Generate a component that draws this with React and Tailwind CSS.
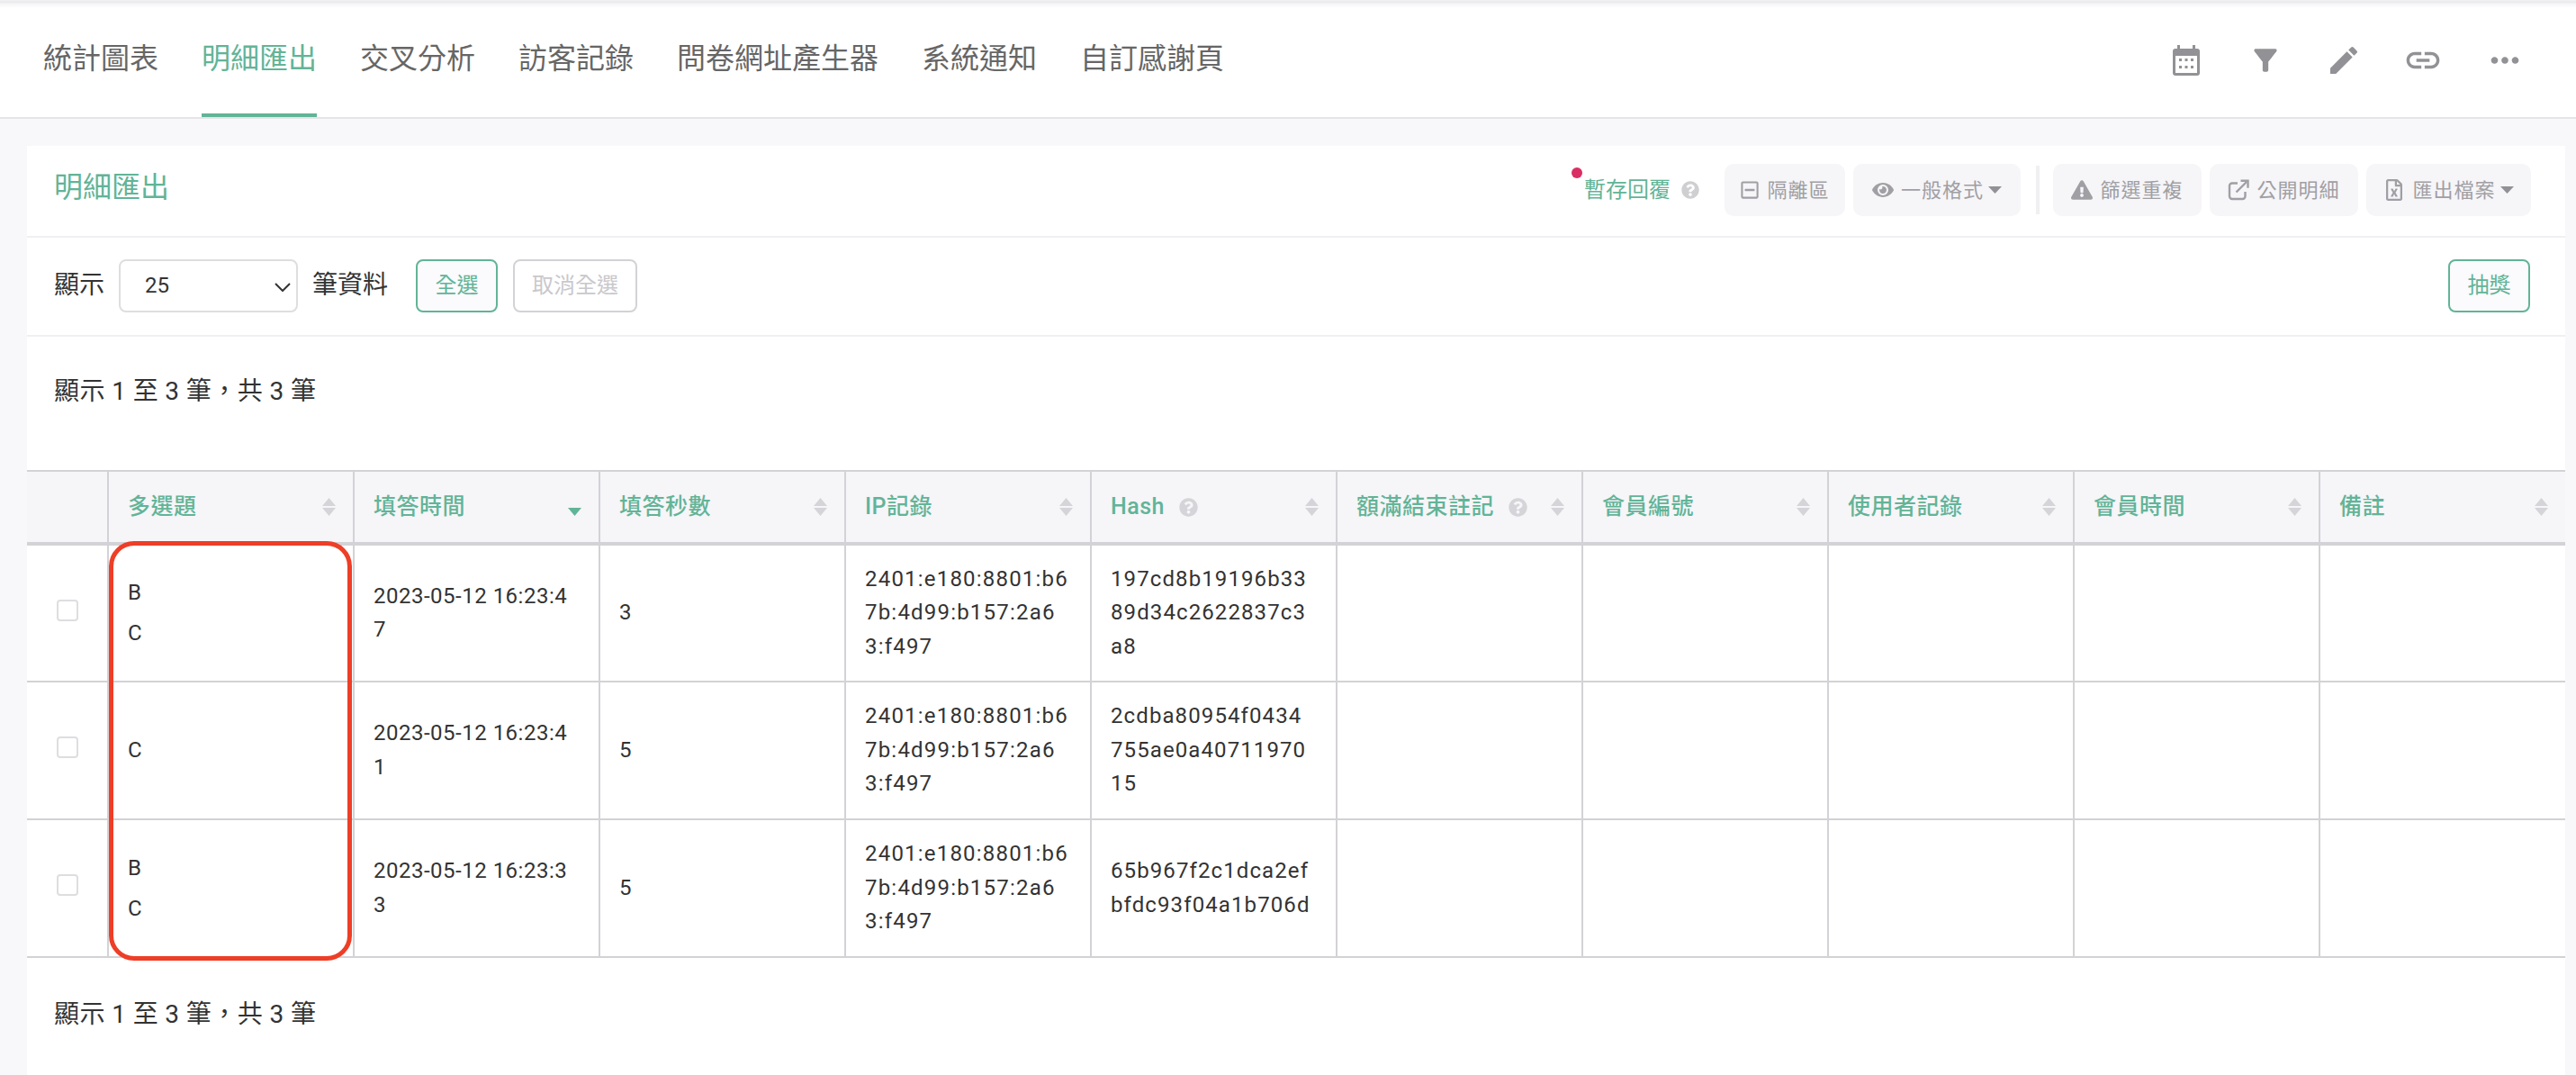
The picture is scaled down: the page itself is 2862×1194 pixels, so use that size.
import { FaExclamationTriangle, FaEye, FaQuestionCircle, FaRegFileExcel, FaRegMinusSquare } from 'react-icons/fa'
import { MdEdit, MdFilterAlt, MdLink, MdMoreHoriz } from 'react-icons/md'

const tabs = ['統計圖表', '明細匯出', '交叉分析', '訪客記錄', '問卷網址產生器', '系統通知', '自訂感謝頁']

const columns = [
  { label: '多選題' },
  { label: '填答時間', sorted: true },
  { label: '填答秒數' },
  { label: 'IP記錄' },
  { label: 'Hash', help: true },
  { label: '額滿結束註記', help: true },
  { label: '會員編號' },
  { label: '使用者記錄' },
  { label: '會員時間' },
  { label: '備註' },
]

const ipLines = ['2401:e180:8801:b6', '7b:4d99:b157:2a6', '3:f497']

const rows = [
  { choices: ['B', 'C'], time: '2023-05-12 16:23:47', secs: '3', hash: ['197cd8b19196b33', '89d34c2622837c3', 'a8'] },
  { choices: ['C'], time: '2023-05-12 16:23:41', secs: '5', hash: ['2cdba80954f0434', '755ae0a40711970', '15'] },
  { choices: ['B', 'C'], time: '2023-05-12 16:23:33', secs: '5', hash: ['65b967f2c1dca2ef', 'bfdc93f04a1b706d'] },
]

const pageInfo = '顯示 1 至 3 筆\uFF0C共 3 筆'

function CalendarIcon() {
  return (
    <svg width="30" height="34" viewBox="0 0 30 34" className="fill-[#929195]">
      <rect x="0" y="4" width="30" height="30" rx="3" />
      <rect x="5" y="0" width="3" height="6" />
      <rect x="22" y="0" width="3" height="6" />
      <rect x="3" y="12" width="24" height="19" fill="#fff" />
      <path d="M7 15h3v3H7zM13.5 15h3v3h-3zM20 15h3v3h-3zM7 23h3v3H7zM13.5 23h3v3h-3zM20 23h3v3h-3z" />
    </svg>
  )
}

function ShareIcon() {
  return (
    <svg width="24" height="24" viewBox="0 0 24 24" fill="none" stroke="#a09fa4" strokeWidth="2.4">
      <path d="M11 4.5H5a3 3 0 0 0-3 3V19a3 3 0 0 0 3 3h11.5a3 3 0 0 0 3-3v-5" />
      <path d="M9.500 14.500 21 3" />
      <path d="M14.500 1.800h8v8" />
    </svg>
  )
}

function Caret() {
  return (
    <svg width="15" height="8" viewBox="0 0 15 8" className="-ml-[3px] fill-[#929195]">
      <path d="M0 0h15L7.500 8z" />
    </svg>
  )
}

function SortIcon({ sorted }) {
  if (sorted) {
    return (
      <svg width="15" height="20" viewBox="0 0 15 20" className="fill-[#62b497]">
        <path d="M0 11h15l-7.500 9z" />
      </svg>
    )
  }
  return (
    <svg width="15" height="20" viewBox="0 0 15 20" className="fill-[#d5d4d8]">
      <path d="M0 9h15L7.500 0zM0 11h15l-7.500 9z" />
    </svg>
  )
}

function ToolButton({ icon, label, caret, className }) {
  return (
    <button className={`flex h-[58px] items-center justify-center gap-2 rounded-[10px] bg-[#f6f5f8] text-[22px] tracking-[1px] text-[#a09fa4] ${className}`}>
      {icon}
      <span>{label}</span>
      {caret && <Caret />}
    </button>
  )
}

export default function App() {
  return (
    <div className="flex h-[1194px] flex-col overflow-hidden bg-[#f8f7fa] font-['Roboto','Noto_Sans_CJK_TC',sans-serif] text-[#333]">
      <div className="h-[4px] bg-gradient-to-b from-[#f3f2f5] via-[#e9e8eb] to-[#f4f4f6]" />

      {/* tabs */}
      <nav className="flex h-[128px] items-stretch justify-between border-b-2 border-[#e5e4e8] bg-white pl-[48px] pr-[56px] shadow-[inset_0_5px_4px_-3px_#f3f3f5]">
        <div className="flex gap-[48px]">
          {tabs.map(tab => (
            <a
              key={tab}
              className={`flex items-center border-b-4 pb-[1px] text-[32px] ${
                tab === '明細匯出' ? 'border-[#62b497] text-[#62b497]' : 'border-transparent text-[#666]'
              }`}
            >
              {tab}
            </a>
          ))}
        </div>
        <div className="flex items-center">
          <CalendarIcon />
          <MdFilterAlt size={38} className="ml-[54px] text-[#929195]" />
          <MdEdit size={40} className="ml-[48px] text-[#929195]" />
          <MdLink size={44} className="ml-[46px] text-[#929195]" />
          <MdMoreHoriz size={46} className="ml-[46px] text-[#929195]" />
        </div>
      </nav>

      <div className="ml-[30px] mr-[12px] mt-[30px] flex-1 bg-white">
        {/* card header */}
        <div className="flex h-[102px] items-center justify-between border-b-2 border-[#f0eff2] pb-[2px] pl-[30px] pr-[38px]">
          <h2 className="mb-[7px] text-[32px] font-normal text-[#62b497]">明細匯出</h2>
          <div className="flex items-center">
            <span className="relative mr-[28px] flex items-center gap-3 text-[24px] text-[#62b497]">
              <span className="absolute -left-[14px] -top-[7px] h-3 w-3 rounded-full bg-[#d92f63]" />
              暫存回覆
              <FaQuestionCircle size={20} className="text-[#cfcfd2]" />
            </span>
            <div className="flex gap-[9px]">
              <ToolButton className="w-[134px]" icon={<FaRegMinusSquare size={22} />} label="隔離區" />
              <ToolButton className="w-[186px]" icon={<FaEye size={24} />} label="一般格式" caret />
            </div>
            <div className="ml-[17px] mr-[15px] h-[54px] w-[4px] bg-[#f0eff2]" />
            <div className="flex gap-[9px]">
              <ToolButton className="w-[165px]" icon={<FaExclamationTriangle size={24} />} label="篩選重複" />
              <ToolButton className="w-[165px]" icon={<ShareIcon />} label="公開明細" />
              <ToolButton className="w-[183px]" icon={<FaRegFileExcel size={24} />} label="匯出檔案" caret />
            </div>
          </div>
        </div>

        {/* page length + select all */}
        <div className="flex h-[110px] items-center justify-between border-b-2 border-[#f0eff2] pb-[2px] pl-[30px] pr-[39px]">
          <div className="flex items-center text-[28px]">
            <span>顯示</span>
            <div className="relative ml-4 mr-4">
              <select className="h-[59px] w-[199px] appearance-none rounded-lg border-2 border-[#dededf] bg-white pl-[27px] text-[24px] text-[#333]">
                <option>25</option>
              </select>
              <svg width="18" height="10" viewBox="0 0 18 10" fill="none" stroke="#333" strokeWidth="2" className="pointer-events-none absolute right-[8px] top-[26px]">
                <path d="M1 1l8 8 8-8" />
              </svg>
            </div>
            <span>筆資料</span>
            <button className="ml-[31px] h-[59px] w-[91px] rounded-lg border-2 border-[#62b497] bg-[#fbfafc] text-[24px] text-[#62b497]">全選</button>
            <button className="ml-[17px] h-[59px] w-[138px] rounded-lg border-2 border-[#d3d2d6] text-[24px] text-[#c9c8cc]">取消全選</button>
          </div>
          <button className="h-[59px] w-[91px] rounded-lg border-2 border-[#62b497] bg-[#fbfafc] text-[24px] text-[#62b497]">抽獎</button>
        </div>

        <div className="flex h-[148px] items-start pl-[30px] pt-[40px] text-[28px] tracking-[.4px]">{pageInfo}</div>

        {/* data table */}
        <div className="relative">
          <table className="w-[2820px] table-fixed border-collapse">
            <colgroup>
              <col className="w-[90px]" />
              {columns.map(col => <col key={col.label} className="w-[273px]" />)}
            </colgroup>
            <thead>
              <tr className="h-[81px] border-y-2 border-b-4 border-[#d3d2d6] bg-[#f6f5f8]">
                <th className="border-r-2 border-[#d3d2d6]" />
                {columns.map(col => (
                  <th key={col.label} className="border-r-2 border-[#d3d2d6] pl-[21px] pr-[19px] last:border-r-0">
                    <div className="flex items-center justify-between text-[25px] font-medium tracking-[.5px] text-[#62b497]">
                      <span className="flex items-center gap-4">
                        {col.label}
                        {col.help && <FaQuestionCircle size={21} className="text-[#d5d4d8]" />}
                      </span>
                      <SortIcon sorted={col.sorted} />
                    </div>
                  </th>
                ))}
              </tr>
            </thead>
            <tbody className="text-[24px] leading-[37.5px] tracking-[.5px]">
              {rows.map(row => (
                <tr key={row.time} className="h-[153px] border-b-2 border-[#d3d2d6]">
                  <td className="border-r-2 border-[#d3d2d6] align-middle">
                    <div className="mx-auto mb-[7px] h-[24px] w-[24px] rounded border-2 border-[#dedde0]" />
                  </td>
                  <td className="border-r-2 border-[#d3d2d6] pl-[21px]">
                    {row.choices.map(c => <div key={c} className="h-[45px] leading-[45px]">{c}</div>)}
                  </td>
                  <td className="border-r-2 border-[#d3d2d6] px-[21px] break-all">{row.time}</td>
                  <td className="border-r-2 border-[#d3d2d6] px-[21px]">{row.secs}</td>
                  <td className="border-r-2 border-[#d3d2d6] pl-[21px] tracking-[1.2px] whitespace-nowrap">
                    {ipLines.map(line => <div key={line}>{line}</div>)}
                  </td>
                  <td className="border-r-2 border-[#d3d2d6] pl-[21px] tracking-[1.1px] whitespace-nowrap">
                    {row.hash.map(line => <div key={line}>{line}</div>)}
                  </td>
                  <td className="border-r-2 border-[#d3d2d6]" />
                  <td className="border-r-2 border-[#d3d2d6]" />
                  <td className="border-r-2 border-[#d3d2d6]" />
                  <td className="border-r-2 border-[#d3d2d6]" />
                  <td />
                </tr>
              ))}
            </tbody>
          </table>
          {/* red highlight drawn over the first answer column */}
          <div className="pointer-events-none absolute left-[91px] top-[79px] h-[466px] w-[270px] rounded-[28px] border-[5px] border-[#ee3e27]" />
        </div>

        <div className="pl-[30px] pt-[42px] text-[28px] tracking-[.4px]">{pageInfo}</div>
      </div>
    </div>
  )
}
